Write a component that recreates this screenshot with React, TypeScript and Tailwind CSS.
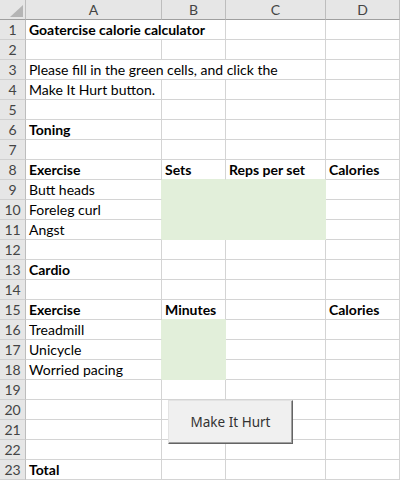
import React from "react";

type Row = {
  a?: string;
  b?: string;
  c?: string;
  d?: string;
  bold?: boolean;
  spanA?: number;
};

const rows: Row[] = [
  { a: "Goatercise calorie calculator", bold: true, spanA: 2 },
  {},
  { a: "Please fill in the green cells, and click the", spanA: 3 },
  { a: "Make It Hurt button." },
  {},
  { a: "Toning", bold: true },
  {},
  { a: "Exercise", b: "Sets", c: "Reps per set", d: "Calories", bold: true },
  { a: "Butt heads" },
  { a: "Foreleg curl" },
  { a: "Angst" },
  {},
  { a: "Cardio", bold: true },
  {},
  { a: "Exercise", b: "Minutes", d: "Calories", bold: true },
  { a: "Treadmill" },
  { a: "Unicycle" },
  { a: "Worried pacing" },
  {},
  {},
  {},
  {},
  { a: "Total", bold: true },
];

// green input cells: row number -> column indexes (0 = A)
const greenCells: Record<number, number[]> = {
  9: [1, 2],
  10: [1, 2],
  11: [1, 2],
  16: [1],
  17: [1],
  18: [1],
};

const isGreen = (r: number, c: number) => (greenCells[r] || []).includes(c);

function Cell({
  r,
  c,
  span,
  text,
  bold,
}: {
  r: number;
  c: number;
  span: number;
  text?: string;
  bold?: boolean;
}) {
  const green = isGreen(r, c);
  const greenRight = green || isGreen(r, c + span);
  const greenBelow = green || isGreen(r + 1, c);
  return (
    <div
      className={[
        "h-5 border-r border-b pl-[3px] leading-[19px] whitespace-nowrap overflow-visible",
        green ? "bg-[#e2efda]" : "bg-white",
        greenRight ? "border-r-[#e2efda]" : "border-r-[#d4d4d4]",
        greenBelow ? "border-b-[#e2efda]" : "border-b-[#d4d4d4]",
        bold ? "font-bold" : "",
        span === 2 ? "col-span-2" : span === 3 ? "col-span-3" : "",
      ].join(" ")}
    >
      {text}
    </div>
  );
}

export default function App() {
  return (
    <div className="relative w-[400px] h-[480px] overflow-hidden bg-white text-[14px] text-black font-['Lato','Noto_Sans',sans-serif]">
      <div className="grid grid-cols-[26px_136px_64px_100px_74px]">
        {/* Corner */}
        <div className="h-5 bg-[#e6e6e6] border-r border-b border-r-[#bdbdbd] border-b-[#9f9f9f] flex items-end justify-end pr-[2px] pb-[2px]">
          <svg width="13" height="12" viewBox="0 0 13 12">
            <polygon points="13,0 13,12 0,12" fill="#b5b5b5" />
          </svg>
        </div>
        {["A", "B", "C", "D"].map((l) => (
          <div
            key={l}
            className="h-5 bg-[#e6e6e6] border-r border-b border-r-[#bdbdbd] border-b-[#9f9f9f] text-center leading-[19px] text-[#444]"
          >
            {l}
          </div>
        ))}

        {rows.map((row, i) => {
          const r = i + 1;
          const span = row.spanA ?? 1;
          const values = [row.a, row.b, row.c, row.d];
          return (
            <React.Fragment key={r}>
              <div className="h-5 bg-[#e6e6e6] border-r border-b border-r-[#bdbdbd] border-b-[#d0d0d0] text-center leading-[19px] text-[#444]">
                {r}
              </div>
              {values.map((v, c) => {
                if (c > 0 && c < span) return null;
                return (
                  <Cell
                    key={c}
                    r={r}
                    c={c}
                    span={c === 0 ? span : 1}
                    text={v}
                    bold={row.bold}
                  />
                );
              })}
            </React.Fragment>
          );
        })}
      </div>

      {/* Form control button floating over the sheet */}
      <button className="absolute left-[168px] top-[400px] w-[125px] h-[44px] bg-[#f0f0f0] border border-t-[#e3e3e3] border-l-[#e3e3e3] border-r-[#646464] border-b-[#646464] shadow-[inset_-1px_-1px_0_#a0a0a0] text-[13.5px] text-[#333] font-['Noto_Sans',sans-serif]">
        Make It Hurt
      </button>
    </div>
  );
}
